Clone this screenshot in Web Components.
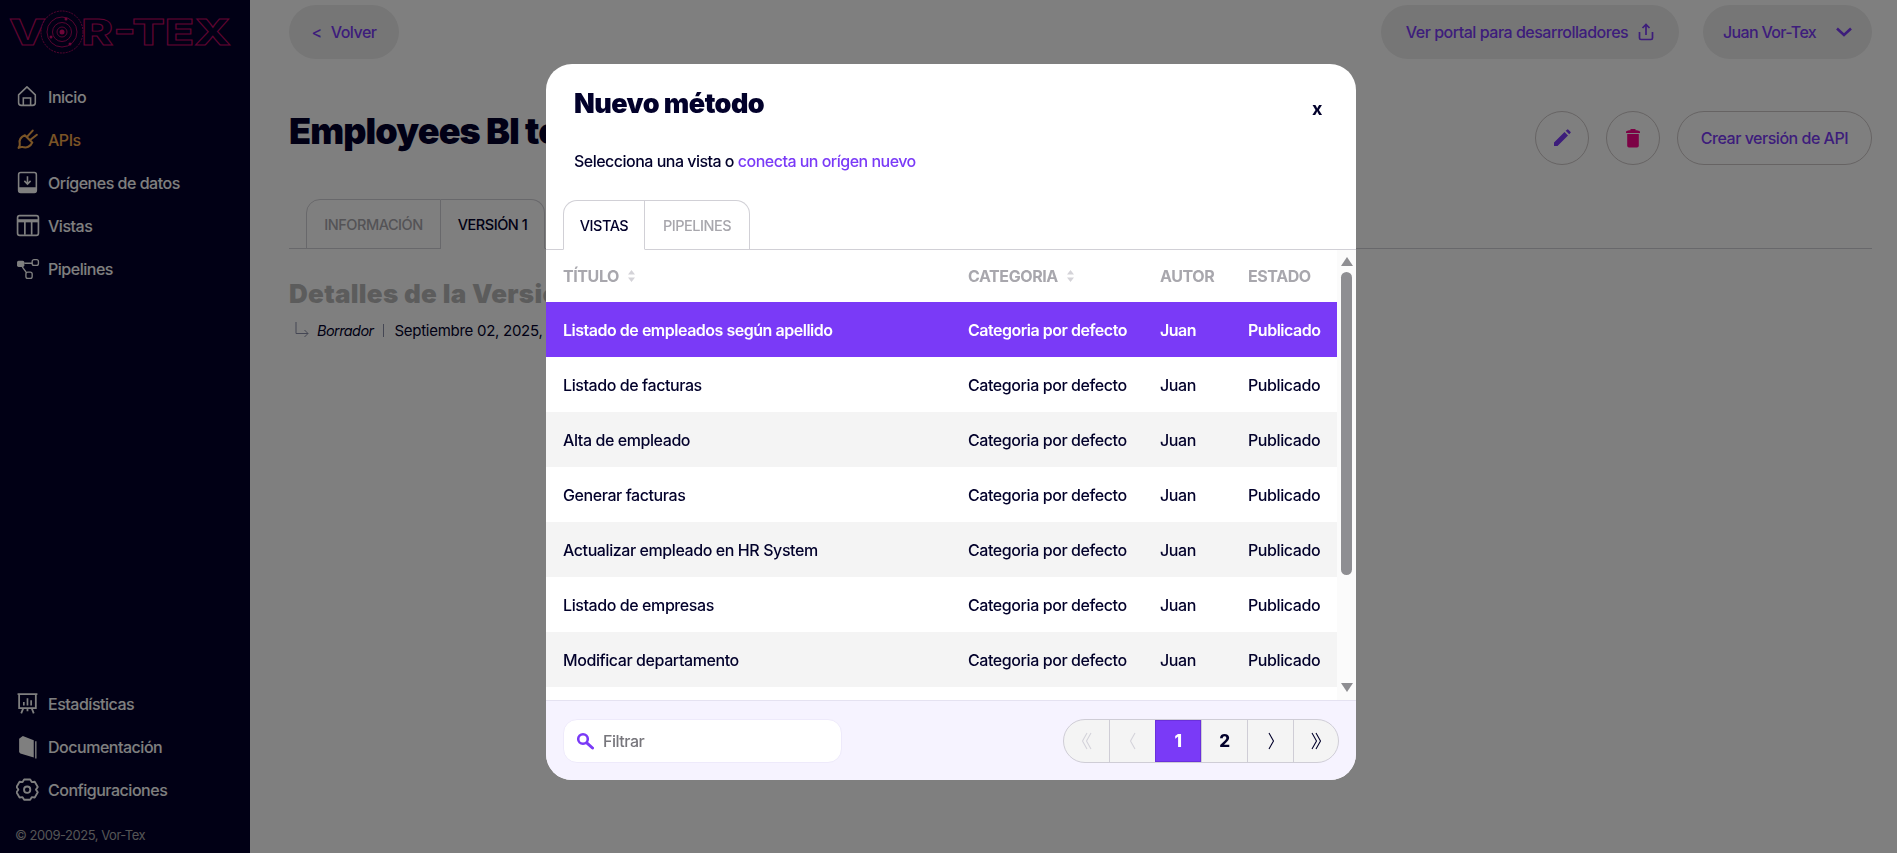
<!DOCTYPE html>
<html lang="es">
<head>
<meta charset="utf-8">
<title>Nuevo método</title>
<style>
  html, body { margin: 0; height: 100%; overflow: hidden; background: #fff; }
  body { font-family: Inter, "Liberation Sans", sans-serif; color: #02012b; letter-spacing: -0.03em; }
</style>
</head>
<body>
<vt-app>
  <vt-sidebar slot="side">
    <vt-nav-item icon="home">Inicio</vt-nav-item>
    <vt-nav-item icon="plug" active>APIs</vt-nav-item>
    <vt-nav-item icon="import">Orígenes de datos</vt-nav-item>
    <vt-nav-item icon="table">Vistas</vt-nav-item>
    <vt-nav-item icon="nodes">Pipelines</vt-nav-item>
    <vt-nav-item slot="bottom" icon="stats">Estadísticas</vt-nav-item>
    <vt-nav-item slot="bottom" icon="book">Documentación</vt-nav-item>
    <vt-nav-item slot="bottom" icon="gear">Configuraciones</vt-nav-item>
  </vt-sidebar>
  <vt-page></vt-page>
</vt-app>
<vt-modal>
  <span slot="title">Nuevo método</span>
  Selecciona una vista o <a>conecta un orígen nuevo</a>
</vt-modal>

<script>
const ICONS = {
  home: '<path d="M2.500 9.500 10.500 1.800l8 7.700V17a2.500 2.500 0 0 1-2.500 2.500H5A2.500 2.500 0 0 1 2.500 17z" fill="none" stroke="currentColor" stroke-width="1.500" stroke-linejoin="round"/><path d="M7 19.500V12.500h7v7" fill="none" stroke="currentColor" stroke-width="1.500"/>',
  plug: '<path d="M8.500 7 15.500 14c-1.500 3.800-5.500 5.500-9 4.300-1.300-.5-2.500 0-4 .7M8.500 7C5 8.500 2.800 11.500 3.600 15c.3 1.300-.3 2.500-1.100 4" fill="none" stroke="currentColor" stroke-width="2" stroke-linecap="round"/><path d="M10.500 8.500 16 2.500M13.500 11.500 20 6.500" fill="none" stroke="currentColor" stroke-width="2" stroke-linecap="round"/>',
  import: '<rect x="2.500" y="1.500" width="17" height="19" rx="2" fill="none" stroke="currentColor" stroke-width="1.500"/><path d="M2.500 15.500h17V19a1.500 1.500 0 0 1-1.500 1.500H4A1.500 1.500 0 0 1 2.500 19z" fill="currentColor"/><path d="M11 5v7M8 9.500l3 3 3-3" fill="none" stroke="currentColor" stroke-width="1.500"/>',
  table: '<rect x="1.500" y="1.500" width="20" height="19" rx="2" fill="none" stroke="currentColor" stroke-width="1.600"/><path d="M1.500 6.500h20" stroke="currentColor" stroke-width="3"/><path d="M8.500 7v13M15 7v13" stroke="currentColor" stroke-width="1.600"/>',
  nodes: '<rect x="1" y="3.500" width="7" height="6" rx="1.500" fill="currentColor"/><rect x="15.500" y="2.500" width="6" height="5.500" rx="1.800" fill="none" stroke="currentColor" stroke-width="1.300"/><rect x="9.500" y="14.500" width="6" height="6" rx="1.800" fill="none" stroke="currentColor" stroke-width="1.300"/><path d="M8 6h7.500M6 9.500l4 5.500" fill="none" stroke="currentColor" stroke-width="1.300"/>',
  stats: '<path d="M1.500 2h19M3 2v13.500h16V2" fill="none" stroke="currentColor" stroke-width="1.700"/><path d="M7 15.500 5 20.500M15 15.500l2 5M11 15.500v3" fill="none" stroke="currentColor" stroke-width="1.700"/><path d="M7.500 9.500V13M11 6V13M14.500 8V13" stroke="currentColor" stroke-width="1.600"/>',
  book: '<path d="M3 3.500 6.500 1 17 5v16.500L5 18c-1.200-.5-2-1.200-2-2.500z" fill="currentColor"/><path d="M19 6v16.500" stroke="currentColor" stroke-width="1.300"/>',
  gear: '<path d="M7.500 2h6l1.500 2.500 3-.3 3 5.200-1.800 2.600 1.800 2.600-3 5.200-3-.3L13.500 22h-6L6 19.500l-3 .3L0 14.600l1.800-2.600L0 9.400l3-5.200 3 .3z" transform="translate(.5 -.5) scale(.97)" fill="none" stroke="currentColor" stroke-width="1.800" stroke-linejoin="round"/><circle cx="10.700" cy="11.200" r="3" fill="none" stroke="currentColor" stroke-width="1.800"/>'
};

class VtApp extends HTMLElement {
  constructor() {
    super();
    this.attachShadow({ mode: "open" });
    this.shadowRoot.innerHTML = `
      <style>
        :host { display: grid; grid-template-columns: 250px 1fr; height: 853px; }
      </style>
      <slot name="side"></slot>
      <slot></slot>`;
  }
}

class VtSidebar extends HTMLElement {
  constructor() {
    super();
    this.attachShadow({ mode: "open" });
    this.shadowRoot.innerHTML = `
      <style>
        :host { display: flex; flex-direction: column; background: #03012a; color: #fff; height: 853px; box-sizing: border-box; }
        svg.logo { display: block; margin: 10px 0 0 8px; }
        nav { display: flex; flex-direction: column; }
        nav.main { margin-top: 21px; }
        .spacer { flex: 1; }
        small { font-size: 13px; color: #aaa; padding: 0 0 10px 15px; margin-top: 16px; line-height: 16px; }
      </style>
      <svg class="logo" width="226" height="44" viewBox="0 0 226 44">
        <g fill="none" stroke="#c40a66" stroke-width=".9">
          <text x="1" y="35" font-family="Inter, sans-serif" font-weight="800" font-size="36" textLength="222" lengthAdjust="spacingAndGlyphs" letter-spacing="0">VOR-TEX</text>
          <circle cx="54" cy="22" r="21" fill="#03012a" stroke-dasharray="2 1"/>
          <circle cx="54" cy="22" r="15"/>
          <circle cx="54" cy="22" r="9.500"/>
          <circle cx="54" cy="22" r="5"/>
        </g>
        <circle cx="54" cy="22" r="2.500" fill="#d80d70"/>
        <circle cx="43" cy="27" r="1.500" fill="#d80d70"/>
        <circle cx="58" cy="9" r="1.500" fill="#d80d70"/>
        <circle cx="62" cy="34" r="1.500" fill="#d80d70"/>
      </svg>
      <nav class="main"><slot></slot></nav>
      <div class="spacer"></div>
      <nav><slot name="bottom"></slot></nav>
      <small>© 2009-2025, Vor-Tex</small>`;
  }
}

class VtNavItem extends HTMLElement {
  constructor() {
    super();
    this.attachShadow({ mode: "open" });
  }
  connectedCallback() {
    const icon = ICONS[this.getAttribute("icon")] || "";
    this.shadowRoot.innerHTML = `
      <style>
        :host { display: flex; align-items: center; height: 43px; padding-left: 16px; gap: 8px; font-size: 16px; font-weight: 500; color: #fff; }
        :host([active]) { color: #f5a94c; }
        svg { width: 24px; height: 24px; flex: none; }
      </style>
      <svg viewBox="0 0 23 23">${icon}</svg>
      <slot></slot>`;
  }
}

class VtPill extends HTMLElement {
  constructor() {
    super();
    this.attachShadow({ mode: "open" });
    this.shadowRoot.innerHTML = `
      <style>
        :host { display: inline-flex; align-items: center; justify-content: center; height: 54px; border-radius: 27px; box-sizing: border-box; padding: 0 20px; background: #ececec; color: #7a3af7; font-size: 16px; font-weight: 500; gap: 10px; white-space: nowrap; flex: none; }
        :host([outline]) { background: transparent; border: 1px solid #cdc7c7; }
        :host([round]) { width: 54px; padding: 0; }
      </style>
      <slot></slot>`;
  }
}

class VtTabs extends HTMLElement {
  constructor() {
    super();
    this.attachShadow({ mode: "open" });
  }
  connectedCallback() {
    const tabs = (this.getAttribute("tabs") || "").split("|");
    const active = Number(this.getAttribute("active") || 0);
    const widths = (this.getAttribute("widths") || "").split("|");
    this.shadowRoot.innerHTML = `
      <style>
        :host { display: flex; border-bottom: 1px solid #d1d0d6; font-size: 14.500px; font-weight: 500; height: 50px; box-sizing: border-box; }
        div { box-sizing: border-box; height: 50px; display: flex; align-items: center; justify-content: center; border: 1px solid #d1d0d6; border-left-width: 0; color: #a8a7ad; flex: none; }
        div:first-of-type { border-left-width: 1px; border-top-left-radius: 14px; }
        div:last-of-type { border-top-right-radius: 14px; }
        div.on { color: #02012b; border-bottom-color: #fff; }
      </style>
      ${tabs.map((t, i) => `<div class="${i === active ? "on" : ""}" style="width:${widths[i]}px">${t}</div>`).join("")}`;
  }
}

class VtPage extends HTMLElement {
  constructor() {
    super();
    this.attachShadow({ mode: "open" });
    this.shadowRoot.innerHTML = `
      <style>
        :host { display: block; padding: 5px 25px 0 39px; }
        header, .title { display: flex; align-items: center; gap: 24px; }
        .grow { flex: 1; }
        .title { margin-top: 52px; gap: 17px; height: 54px; }
        h1 { margin: 0 0 14px; font-size: 36px; font-weight: 900; line-height: 54px; color: #02012b; letter-spacing: -0.025em; }
        vt-tabs { margin-top: 34px; padding-left: 17px; }
        h2 { margin: 25px 0 0; font-size: 26px; font-weight: 900; color: #b8b8b8; line-height: 40px; letter-spacing: 0.012em; }
        .meta { display: flex; align-items: center; margin-top: 5px; font-size: 15px; padding-left: 6px; height: 22px; letter-spacing: -0.018em; }
        .meta i { margin-left: 8px; font-size: 14.500px; letter-spacing: -0.04em; }
        .meta b { width: 1px; height: 13px; background: #8a8fa8; margin: 0 10px; }
        svg { flex: none; }
      </style>
      <header>
        <vt-pill style="width:110px"><span style="margin-right:-1px">&lt;</span> Volver</vt-pill>
        <span class="grow"></span>
        <vt-pill style="width:298px">Ver portal para desarrolladores
          <svg width="16" height="18" viewBox="0 0 16 18" fill="none" stroke="currentColor" stroke-width="1.700"><path d="M8 12V2M4.500 5 8 1.500 11.500 5M1.500 9v6a1.500 1.500 0 0 0 1.500 1.500h10a1.500 1.500 0 0 0 1.500-1.500V9"/></svg>
        </vt-pill>
        <vt-pill style="width:169px;gap:20px;letter-spacing:-0.04em">Juan Vor-Tex
          <svg width="16" height="10" viewBox="0 0 16 10" fill="none" stroke="currentColor" stroke-width="2.600"><path d="M1 1.500 8 8l7-6.500"/></svg>
        </vt-pill>
      </header>
      <div class="title">
        <h1>Employees BI te</h1>
        <span class="grow"></span>
        <vt-pill outline round>
          <svg width="18" height="18" viewBox="0 0 18 18" fill="currentColor"><path d="M1 13.500 11.500 3l3.500 3.500L4.500 17H1zM12.700 1.800l1.300-1.100a1 1 0 0 1 1.400 0l2 2a1 1 0 0 1 0 1.400l-1.200 1.200z"/></svg>
        </vt-pill>
        <vt-pill outline round style="color:#f9058a">
          <svg width="16" height="20" viewBox="0 0 16 20" fill="currentColor"><path d="M1 3.500C2 2.500 4 2.200 5.500 2.200V1h5v1.200c1.500 0 3.500.3 4.500 1.300v1.500H1zM2.200 6h11.600v11.800a1.800 1.800 0 0 1-1.800 1.800H4a1.800 1.800 0 0 1-1.800-1.800z"/></svg>
        </vt-pill>
        <vt-pill outline style="width:195px;padding:0">Crear versión de API</vt-pill>
      </div>
      <vt-tabs tabs="INFORMACIÓN|VERSIÓN 1" widths="135|104" active="1"></vt-tabs>
      <h2>Detalles de la Versió</h2>
      <div class="meta">
        <svg width="14" height="16" viewBox="0 0 14 16" fill="none" stroke="#8a8fa8" stroke-width="1"><path d="M1 0v11.500h12M9.500 8l3.500 3.500L9.500 15"/></svg>
        <i>Borrador</i><b></b><span>Septiembre 02, 2025, 0</span>
      </div>`;
  }
}

class VtTable extends HTMLElement {
  constructor() {
    super();
    this.attachShadow({ mode: "open" });
  }
  connectedCallback() {
    const names = ["Listado de empleados según apellido", "Listado de facturas", "Alta de empleado", "Generar facturas", "Actualizar empleado en HR System", "Listado de empresas", "Modificar departamento"];
    const sort = `<svg width="9" height="12" viewBox="0 0 9 12" fill="#d4d3d8"><path d="M4.500 0 8 4.500H1zM4.500 12 1 7.500h7z"/></svg>`;
    this.shadowRoot.innerHTML = `
      <style>
        :host { display: flex; height: 450px; }
        .body { width: 791px; flex: none; background: #fff; }
        .row { display: grid; grid-template-columns: 405px 192px 88px 1fr; height: 55px; align-items: center; padding-left: 17px; font-size: 16px; font-weight: 500; letter-spacing: -0.026em; }
        .row.head { height: 52px; color: #a8a7ad; font-weight: 700; font-size: 16px; }
        .row.head span { display: flex; align-items: center; gap: 8px; }
        .row.alt { background: #f4f4f4; }
        .row.sel { background: #7a3af7; color: #fff; font-weight: 600; letter-spacing: -0.03em; }
        .bar { flex: 1; background: #fbfbfb; display: flex; flex-direction: column; align-items: center; }
        .arrow { width: 0; height: 0; border-left: 6.500px solid transparent; border-right: 6.500px solid transparent; }
        .up { border-bottom: 9px solid #8e8e92; margin-top: 7px; }
        .dn { border-top: 9px solid #8e8e92; margin-top: 108px; }
        .thumb { width: 11px; height: 303px; border-radius: 6px; background: #8e8e92; margin-top: 6px; }
      </style>
      <div class="body">
        <div class="row head"><span>TÍTULO ${sort}</span><span>CATEGORIA ${sort}</span><span>AUTOR</span><span>ESTADO</span></div>
        ${names.map((n, i) => `<div class="row ${i === 0 ? "sel" : ""} ${i % 2 === 0 && i > 0 ? "alt" : ""}"><span>${n}</span><span>Categoria por defecto</span><span>Juan</span><span>Publicado</span></div>`).join("")}
      </div>
      <div class="bar"><div class="arrow up"></div><div class="thumb"></div><div class="arrow dn"></div></div>`;
  }
}

class VtPager extends HTMLElement {
  constructor() {
    super();
    this.attachShadow({ mode: "open" });
  }
  connectedCallback() {
    const chev = (d) => `<svg width="14" height="22" viewBox="0 0 14 22" fill="none" stroke="currentColor" stroke-width="1.100">${d}</svg>`;
    const items = [
      ["off", chev('<path d="M7 3 2.500 11 7 19M11 3 6.500 11 11 19"/>')],
      ["off", chev('<path d="M9 3 4.500 11 9 19"/>')],
      ["on", "1"],
      ["", "2"],
      ["", chev('<path d="M5 3l4.500 8L5 19"/>')],
      ["", chev('<path d="M3 3l4.500 8L3 19M7 3l4.500 8L7 19"/>')]
    ];
    this.shadowRoot.innerHTML = `
      <style>
        :host { display: flex; height: 44px; box-sizing: border-box; border: 1px solid #cfcdd6; border-radius: 22px; overflow: hidden; background: #f4f4f4; font-weight: 800; font-size: 17px; }
        div { width: 46px; display: flex; align-items: center; justify-content: center; border-left: 1px solid #cfcdd6; box-sizing: border-box; color: #02012b; }
        div:first-of-type { border-left: 0; width: 45px; }
        div:last-of-type { width: 45px; }
        .off { color: #d4d3da; }
        .on { background: #7a3af7; color: #fff; border: 1px solid #6a30dc; }
      </style>
      ${items.map(([c, h]) => `<div class="${c}">${h}</div>`).join("")}`;
  }
}

class VtFilter extends HTMLElement {
  constructor() {
    super();
    this.attachShadow({ mode: "open" });
    this.shadowRoot.innerHTML = `
      <style>
        :host { display: flex; align-items: center; width: 279px; height: 44px; box-sizing: border-box; background: #fff; border: 1px solid #eeeafb; border-radius: 14px; padding-left: 12px; gap: 9px; color: #77767c; font-size: 16px; font-weight: 500; }
        svg { flex: none; }
      </style>
      <svg width="18" height="18" viewBox="0 0 18 18" fill="none" stroke="#7a3af7"><circle cx="7" cy="7" r="4.800" stroke-width="2.600"/><path d="M10.800 10.800 16.500 16" stroke-width="3" stroke-linecap="round"/></svg>
      <span>Filtrar</span>`;
  }
}

class VtModal extends HTMLElement {
  constructor() {
    super();
    this.attachShadow({ mode: "open" });
    this.shadowRoot.innerHTML = `
      <style>
        :host { position: fixed; inset: 0; background: rgba(0,0,0,.5); display: block; padding: 64px 0 0 546px; box-sizing: border-box; }
        .box { width: 810px; height: 716px; background: #fff; border-radius: 26px; overflow: hidden; display: flex; flex-direction: column; }
        .top { height: 136px; flex: none; padding: 0 0 0 28px; position: relative; }
        h3 { margin: 0; padding-top: 21px; font-size: 27px; font-weight: 900; line-height: 38px; color: #02012b; letter-spacing: -0.02em; }
        p { margin: 27px 0 0; font-size: 16px; font-weight: 500; line-height: 22px; letter-spacing: -0.032em; }
        ::slotted(a) { color: #7a3af7; }
        .close { position: absolute; top: 36px; right: 34px; font-size: 18px; font-weight: 700; line-height: 18px; }
        vt-tabs { padding-left: 17px; }
        footer { flex: 1; display: flex; align-items: center; justify-content: space-between; background: #f6f3ff; border-top: 1px solid #e5e2f1; padding: 0 17px; box-sizing: border-box; }
      </style>
      <div class="box">
        <div class="top">
          <h3><slot name="title"></slot></h3>
          <p><slot></slot></p>
          <span class="close">x</span>
        </div>
        <vt-tabs tabs="VISTAS|PIPELINES" widths="82|105" active="0"></vt-tabs>
        <vt-table></vt-table>
        <footer>
          <vt-filter></vt-filter>
          <vt-pager></vt-pager>
        </footer>
      </div>`;
  }
}

customElements.define("vt-app", VtApp);
customElements.define("vt-sidebar", VtSidebar);
customElements.define("vt-nav-item", VtNavItem);
customElements.define("vt-pill", VtPill);
customElements.define("vt-tabs", VtTabs);
customElements.define("vt-page", VtPage);
customElements.define("vt-table", VtTable);
customElements.define("vt-pager", VtPager);
customElements.define("vt-filter", VtFilter);
customElements.define("vt-modal", VtModal);
</script>
</body>
</html>
